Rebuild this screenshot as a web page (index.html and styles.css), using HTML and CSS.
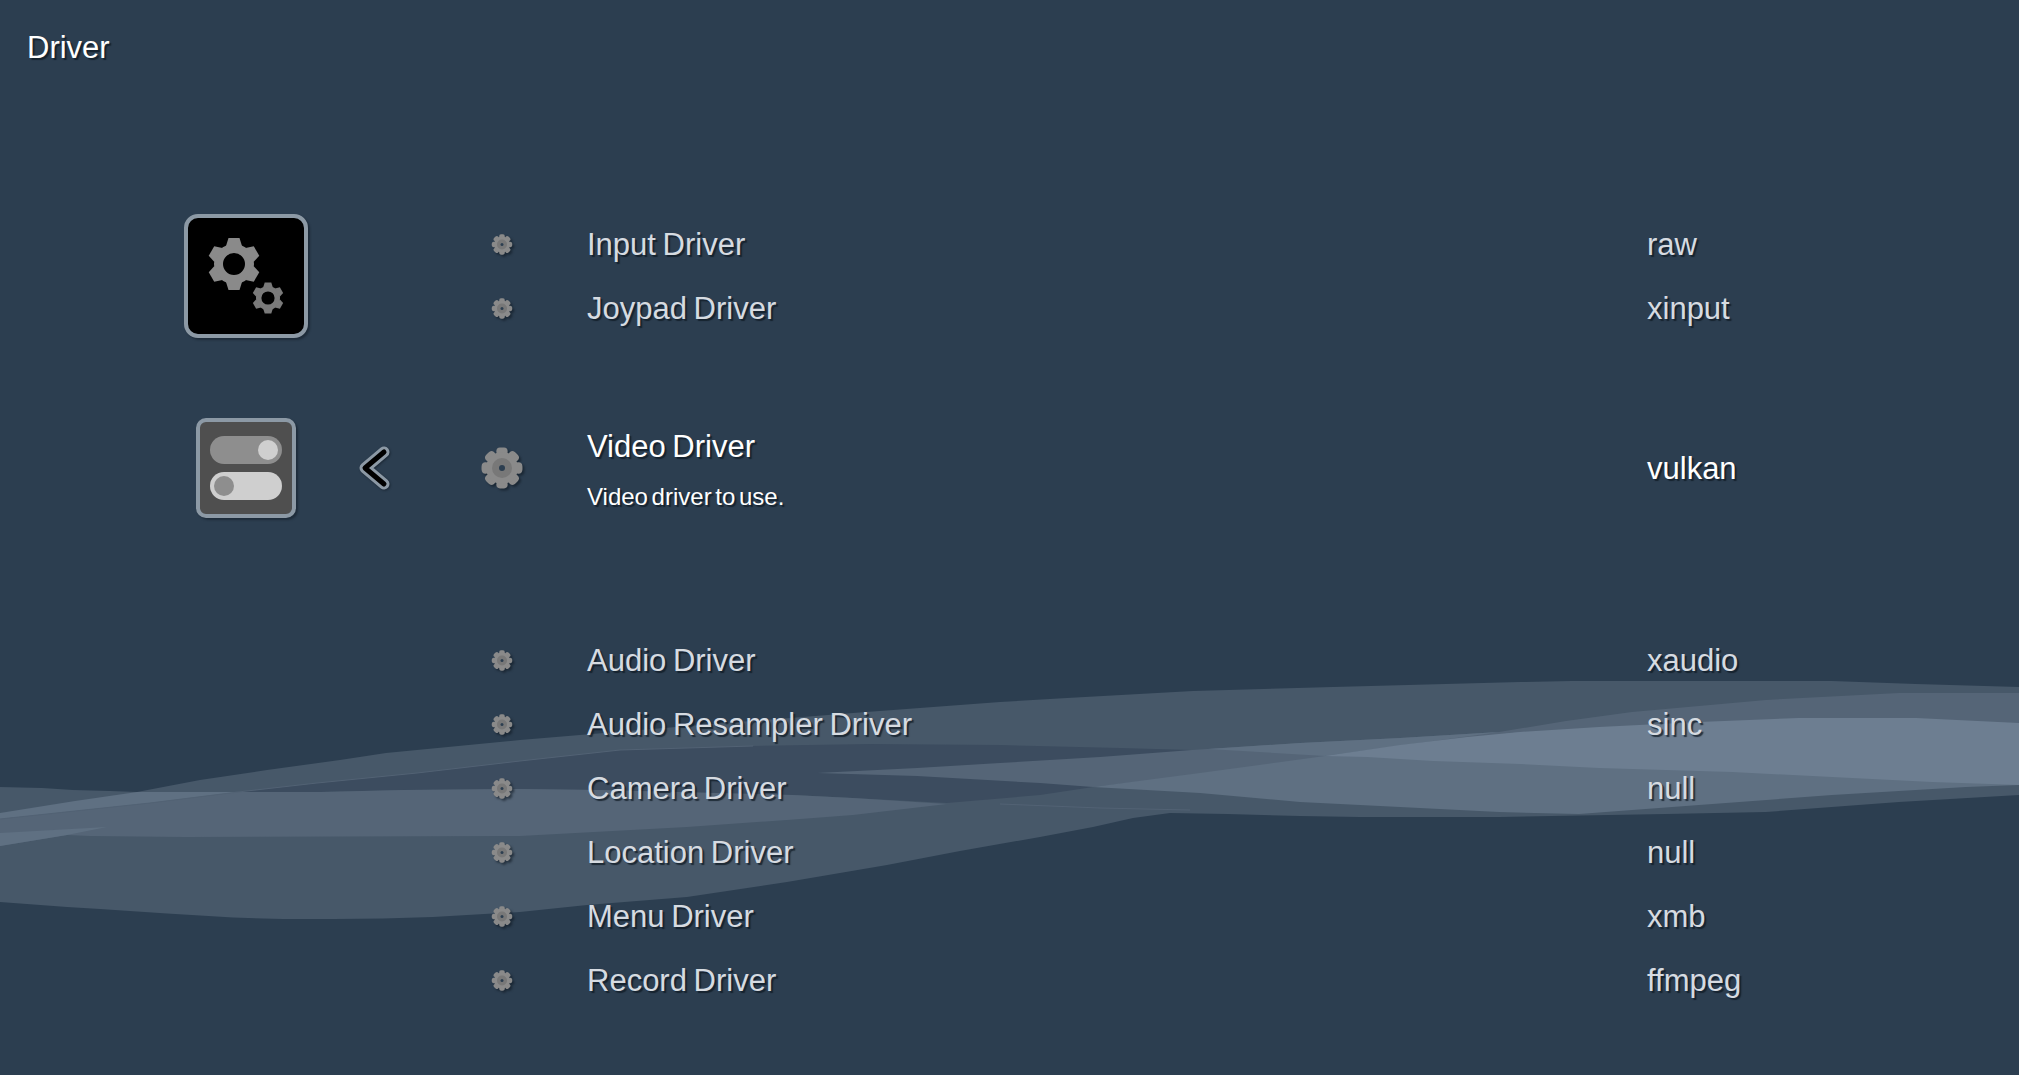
FILE: index.html
```html
<!DOCTYPE html>
<html lang="en">
<head>
  <meta charset="UTF-8" />
  <title>Driver</title>
  <link rel="stylesheet" href="styles.css">
</head>
<body>
  <!-- Background ribbon, painted back to front -->
  <svg class="ribbon" viewBox="0 0 2019 1075" aria-hidden="true">
    <polygon class="band-base" points="0,787 42,788 73,790 110,791 137,792 200,780 267,770 340,760 386,753 520,740 580,735 700,725 853,713 1000,702 1067,698 1193,691 1333,687 1520,682 1572,681 1832,681 1916,684 2019,687 2019,795 1899,802 1766,812 1666,814 1499,817 1360,817 1300,816 1227,814 1170,813 1133,818 1093,827 1040,837 960,851 887,865 787,882 687,897 587,905 520,912 433,917 383,918.5 333,919 283,919 233,917.5 167,913.5 100,909 67,907 0,902" />
    <polygon class="band-dim" points="238,792 317,783 417,773 520,761 620,750 753,746 870,744 1000,745 1120,748 1192,750 1093,787 1040,795 947,803 853,798 793,795 600,790 520,789 403,790 320,792" />
    <polygon class="band-mid" points="0,819 150,803 238,792 320,792 403,790 520,789 600,790 793,795 853,798 947,804 853,815 787,820 687,827 520,836 185,837 90,836 67,835 0,846" />
    <polygon class="band-light" points="0,813 75,801 137,792 238,792 150,803 0,819" />
    <polygon class="band-light" points="0,833 107,827 67,835 0,846" />
    <polygon class="band-mid" points="817,773 917,768 1000,763 1100,757 1192,750 1300,743 1400,738 1499,732 1566,721 1632,712 1766,700 1899,693 2019,693 2019,740 1325,760 1093,787 1040,783 917,776" />
    <polygon class="band-light" points="1208,749 1300,743 1400,738 1499,732 1325,756" />
    <polygon class="band-light" points="1093,787 1200,773 1325,756 1520,732 2019,723 2019,785 1966,787 1832,795 1699,805 1579,814 1499,812 1400,807 1300,802 1200,793" />
    <polygon class="band-bright" points="1325,756 1400,745 1467,737 1520,732 1599,727 1699,722 1799,718 1916,718 2019,723 2019,785 1932,782 1832,777 1732,772 1599,768 1520,764 1433,761 1367,757" />
    <polyline class="streak" points="1000,804 1100,808 1190,810" />
    <polyline class="streak" points="238,792 317,783 417,773 520,761 620,750 753,746" />
    <polyline class="streak" points="0,819 150,803 238,792" />
  </svg>

  <svg class="defs" aria-hidden="true">
    <symbol id="cog" viewBox="0 0 42 42">
      <circle class="cog-teeth" cx="21" cy="21" r="16.5" pathLength="360" />
      <circle class="cog-body" cx="21" cy="21" r="16" />
      <circle class="cog-ring" cx="21" cy="21" r="10" />
      <circle class="cog-hole" cx="21" cy="21" r="3" />
    </symbol>
    <g id="gear-shape">
      <path fill-rule="evenodd" d="M-20,0a20,20 0 1,0 40,0a20,20 0 1,0 -40,0zM-11,0a11,11 0 1,0 22,0a11,11 0 1,0 -22,0z" />
      <polygon id="gear-tooth" points="-8,-18 -5.5,-26 5.5,-26 8,-18" />
      <use href="#gear-tooth" transform="rotate(60)" />
      <use href="#gear-tooth" transform="rotate(120)" />
      <use href="#gear-tooth" transform="rotate(180)" />
      <use href="#gear-tooth" transform="rotate(240)" />
      <use href="#gear-tooth" transform="rotate(300)" />
    </g>
  </svg>

  <header class="top">
    <h1>Driver</h1>
  </header>

  <main class="menu">
    <aside class="side">
      <div class="tile tile-black">
        <svg viewBox="0 0 116 116">
          <use class="gear-big" href="#gear-shape" transform="translate(46 46)" />
          <use class="gear-small" href="#gear-shape" transform="translate(80 80) scale(0.6)" />
        </svg>
      </div>
      <div class="side-current">
        <div class="tile tile-grey">
          <div class="switch switch-on"><span class="knob"></span></div>
          <div class="switch switch-off"><span class="knob"></span></div>
        </div>
        <svg class="back" viewBox="0 0 32 44">
          <polyline class="back-outer" points="25,6 6,22 25,38" />
          <polyline class="back-inner" points="25,6 6,22 25,38" />
        </svg>
      </div>
    </aside>

    <div class="list">
      <div class="row">
        <svg class="cog"><use href="#cog" /></svg>
        <span class="label">Input Driver</span>
        <span class="value">raw</span>
      </div>
      <div class="row">
        <svg class="cog"><use href="#cog" /></svg>
        <span class="label">Joypad Driver</span>
        <span class="value">xinput</span>
      </div>

      <div class="row row-active">
        <svg class="cog"><use href="#cog" /></svg>
        <div class="label">
          <div>Video Driver</div>
          <div class="desc">Video driver to use.</div>
        </div>
        <span class="value">vulkan</span>
      </div>

      <div class="row">
        <svg class="cog"><use href="#cog" /></svg>
        <span class="label">Audio Driver</span>
        <span class="value">xaudio</span>
      </div>
      <div class="row">
        <svg class="cog"><use href="#cog" /></svg>
        <span class="label">Audio Resampler Driver</span>
        <span class="value">sinc</span>
      </div>
      <div class="row">
        <svg class="cog"><use href="#cog" /></svg>
        <span class="label">Camera Driver</span>
        <span class="value">null</span>
      </div>
      <div class="row">
        <svg class="cog"><use href="#cog" /></svg>
        <span class="label">Location Driver</span>
        <span class="value">null</span>
      </div>
      <div class="row">
        <svg class="cog"><use href="#cog" /></svg>
        <span class="label">Menu Driver</span>
        <span class="value">xmb</span>
      </div>
      <div class="row">
        <svg class="cog"><use href="#cog" /></svg>
        <span class="label">Record Driver</span>
        <span class="value">ffmpeg</span>
      </div>
    </div>
  </main>
</body>
</html>
```

FILE: styles.css
```css
html, body {
  margin: 0;
  padding: 0;
}
body {
  position: relative;
  width: 2019px;
  height: 1075px;
  overflow: hidden;
  background: #2c3e50;
  color: #d6dbe1;
  font-family: "Liberation Sans", Arial, sans-serif;
  font-size: 31px;
  word-spacing: -2px;
  text-shadow: 2px 2px 1px rgba(15, 25, 35, 0.75);
}

/* background ribbon */
.ribbon {
  position: absolute;
  left: 0;
  top: 0;
  width: 2019px;
  height: 1075px;
}
.band-base { fill: #475869; }
.band-dim { fill: #3c4c5f; }
.band-mid { fill: #556577; }
.band-light { fill: #5f7082; }
.band-bright { fill: #6d7e91; }
.streak {
  fill: none;
  stroke: #526274;
  stroke-width: 1;
}
.defs {
  position: absolute;
  width: 0;
  height: 0;
}

/* title */
.top {
  position: relative;
  height: 212px;
  padding-left: 27px;
  box-sizing: border-box;
}
.top h1 {
  margin: 0;
  padding-top: 31px;
  font-size: 31px;
  font-weight: 400;
  line-height: 34px;
  color: #fff;
}

/* main layout */
.menu {
  position: relative;
  display: flex;
  padding-left: 184px;
}
.side {
  width: 206px;
  padding-top: 2px;
}
.tile {
  box-sizing: border-box;
  border: 4px solid #8c99a5;
  box-shadow: 2px 2px 2px rgba(15, 25, 35, 0.5);
}
.tile svg {
  display: block;
  width: 100%;
  height: 100%;
}
.tile-black {
  width: 124px;
  height: 124px;
  border-radius: 14px;
  background: #000;
}
.side-current {
  display: flex;
  align-items: center;
  margin-top: 80px;
  padding-left: 12px;
}
.tile-grey {
  display: flex;
  flex: none;
  flex-direction: column;
  gap: 8px;
  width: 100px;
  height: 100px;
  padding: 14px 10px;
  border-radius: 10px;
  background: #4f4f4f;
}
.switch {
  display: flex;
  align-items: center;
  flex: none;
  height: 28px;
  padding: 0 4px;
  border-radius: 14px;
}
.knob {
  width: 20px;
  height: 20px;
  border-radius: 50%;
}
.switch-on {
  justify-content: flex-end;
  background: #8e8e8e;
}
.switch-on .knob { background: #cfcfcf; }
.switch-off { background: #cfcfcf; }
.switch-off .knob { background: #8e8e8e; }

.back {
  flex: none;
  width: 32px;
  height: 44px;
  margin-left: 63px;
  overflow: visible;
  filter: drop-shadow(1px 1px 1px rgba(15, 25, 35, 0.6));
}
.back-outer {
  fill: none;
  stroke: #8c99a5;
  stroke-width: 11;
  stroke-linecap: round;
  stroke-linejoin: round;
}
.back-inner {
  fill: none;
  stroke: #000;
  stroke-width: 5;
  stroke-linecap: round;
  stroke-linejoin: round;
}

/* gears in the black tile */
.gear-big { fill: #8a8a8a; }
.gear-small { fill: #7a7a7a; }

/* rows */
.list {
  flex: 1;
  padding-left: 91px;
}
.row {
  display: flex;
  align-items: center;
  height: 64px;
}
.row-active {
  height: 168px;
  margin-top: 44px;
  margin-bottom: 76px;
  color: #fff;
}
.row-active .label {
  align-self: flex-start;
  padding-top: 46px;
  line-height: 34px;
}
.desc {
  margin-top: 18px;
  font-size: 24px;
  word-spacing: -3px;
  line-height: 30px;
}
.cog {
  flex: none;
  width: 42px;
  height: 21px;
  margin-right: 64px;
  filter: drop-shadow(2px 2px 1px rgba(15, 25, 35, 0.6));
}
.row-active .cog {
  height: 42px;
}
.cog-teeth {
  fill: none;
  stroke: #8a8a8a;
  stroke-width: 8;
  stroke-linecap: round;
  stroke-dasharray: 12 33;
  stroke-dashoffset: 6;
}
.cog-body { fill: #8a8a8a; }
.cog-ring { fill: #787878; }
.cog-hole { fill: #2c3e50; }
.label {
  width: 1060px;
  flex: none;
  padding-top: 2px;
}
.value {
  padding-top: 2px;
}
```
